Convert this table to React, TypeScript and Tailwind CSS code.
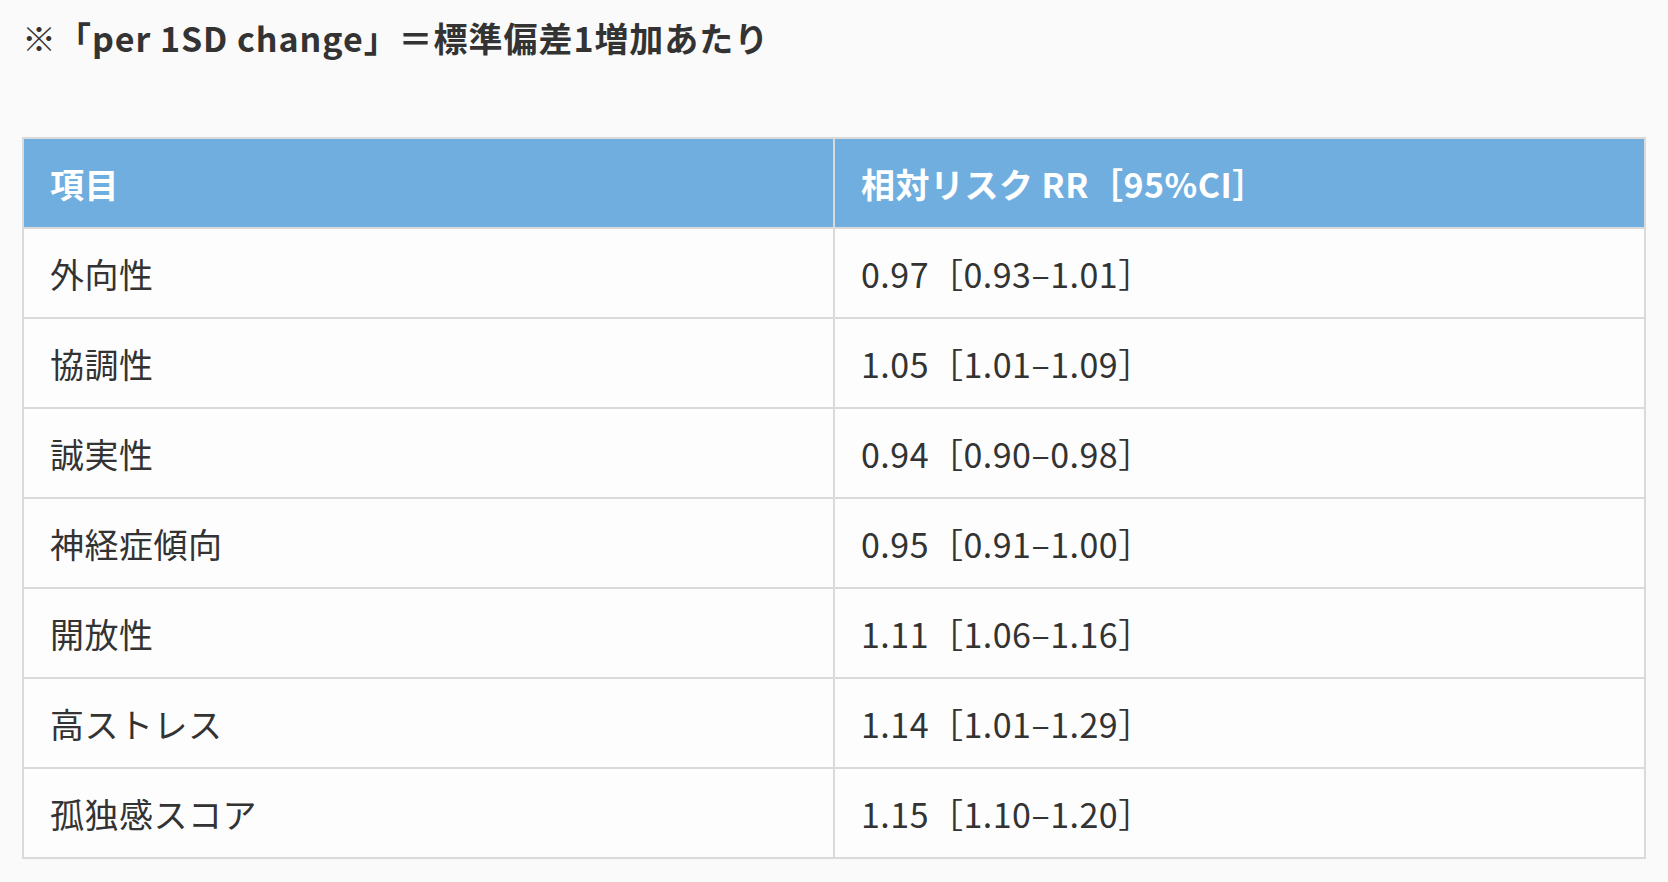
const rows: [string, string][] = [
  ['外向性', '0.97［0.93–1.01］'],
  ['協調性', '1.05［1.01–1.09］'],
  ['誠実性', '0.94［0.90–0.98］'],
  ['神経症傾向', '0.95［0.91–1.00］'],
  ['開放性', '1.11［1.06–1.16］'],
  ['高ストレス', '1.14［1.01–1.29］'],
  ['孤独感スコア', '1.15［1.10–1.20］'],
];

export default function App() {
  return (
    <div
      className="min-h-screen bg-[#fafafa] px-[22px] pt-[12px] pb-6 tracking-[0.03em] text-[#333]"
      style={{ fontFamily: '"Noto Sans CJK JP", "Noto Sans", sans-serif' }}
    >
      <p className="text-[34px] font-bold leading-[52px] tracking-[0.028em]">※「per 1SD change」＝標準偏差1増加あたり</p>

      <table className="mt-[73px] w-full border-collapse border-2 border-[#dadada] text-[34px]">
        <thead>
          <tr className="bg-[#71aee0] text-white">
            <th className="h-[90px] w-1/2 border-2 border-[#dadada] pl-[26px] text-left font-bold">項目</th>
            <th className="h-[90px] w-1/2 border-2 border-[#dadada] pl-[26px] text-left font-bold">相対リスク RR［95%CI］</th>
          </tr>
        </thead>
        <tbody>
          {rows.map(([label, value]) => (
            <tr key={label} className="bg-[#fdfdfd]">
              <td className="h-[90px] border-2 border-[#dadada] pl-[26px]">{label}</td>
              <td className="h-[90px] border-2 border-[#dadada] pl-[26px]">{value}</td>
            </tr>
          ))}
        </tbody>
      </table>
    </div>
  );
}
